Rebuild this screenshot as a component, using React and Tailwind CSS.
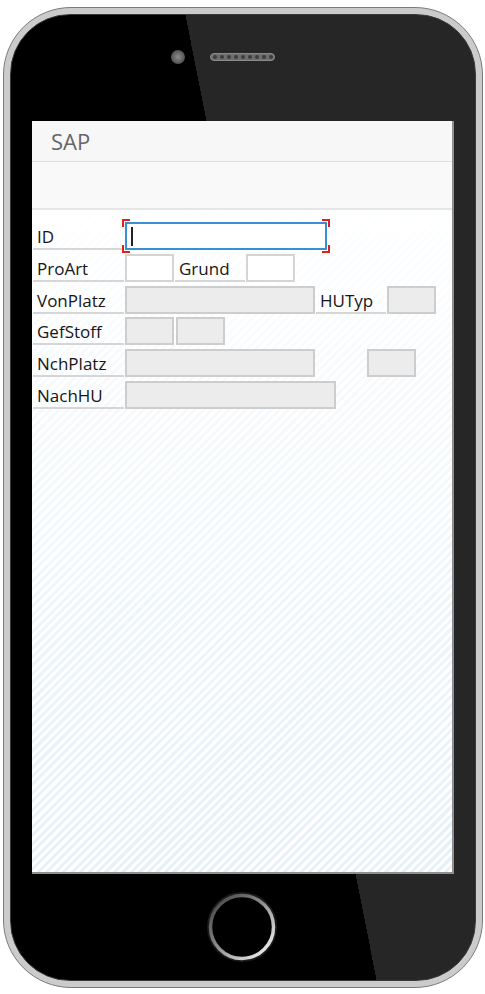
import React from 'react'

const font = { fontFamily: '"Open Sans", "Noto Sans", sans-serif' }

function Label({ children, className = '' }) {
    return (
        <div className={`flex items-end pl-[4px] border-b-2 border-[#d6d6d6] text-[17px] leading-[23px] text-[#161616] ${className}`}>
            {children}
        </div>
    )
}

function Field({ className = '', filled = true }) {
    return (
        <div
            className={`h-full border-2 ${filled ? 'bg-[#ececec] border-[#cdcdcd]' : 'bg-white border-[#d4d4d4]'} ${className}`}
        />
    )
}

function Corner({ className }) {
    return <span className={`absolute w-[8px] h-[8px] border-[#e0201c] ${className}`} />
}

function FocusField() {
    return (
        <div className="relative ml-[1px] w-[202px] h-full">
            <Corner className="-left-[3px] -top-[3px] border-l-2 border-t-2" />
            <Corner className="-right-[3px] -top-[3px] border-r-2 border-t-2" />
            <Corner className="-left-[3px] -bottom-[3px] border-l-2 border-b-2" />
            <Corner className="-right-[3px] -bottom-[3px] border-r-2 border-b-2" />
            <div className="h-full border-2 border-[#3a8fd3] bg-white flex items-center pl-[4px]">
                <span className="w-[2px] h-[19px] bg-[#222]" />
            </div>
        </div>
    )
}

function HomeButton() {
    return (
        <svg width="70" height="70" viewBox="0 0 70 70">
            <defs>
                <linearGradient id="ring" x1="0" y1="0" x2="1" y2="1">
                    <stop offset="0" stopColor="#3a3a3a" />
                    <stop offset="0.45" stopColor="#8a8a8a" />
                    <stop offset="1" stopColor="#ffffff" />
                </linearGradient>
            </defs>
            <circle cx="35" cy="35" r="34" fill="none" stroke="#1a1a1a" strokeWidth="2" />
            <circle cx="35" cy="35" r="31.5" fill="#000" stroke="url(#ring)" strokeWidth="3.5" />
        </svg>
    )
}

export default function App() {
    return (
        <div className="w-[485px] h-[994px] bg-white overflow-hidden pt-[7px]" style={font}>
            <div className="ml-[3px] w-[480px] h-[981px] rounded-[68px] border border-[#7a7a7a] bg-[#cbcbcb] p-[6px]">
                <div className="w-full h-full rounded-[60px] border border-[#3a3a3a] bg-[linear-gradient(78.8deg,#000_55.8%,#262626_55.8%)] flex flex-col">
                    {/* camera + speaker */}
                    <div className="mt-[35px] ml-[160px] h-[14px] flex items-center gap-[25px]">
                        <span className="w-[14px] h-[14px] rounded-full bg-[radial-gradient(circle,#8c8c8c_0%,#5e5e5e_55%,#3a3a3a_100%)]" />
                        <div className="w-[65px] h-[8px] rounded-full bg-[#6e6e6e] border border-[#8a8a8a] flex items-center justify-center gap-[3px]">
                            {Array.from({ length: 9 }).map((_, i) => (
                                <span key={i} className="w-[4px] h-[4px] rounded-full bg-[#3e3e3e]" />
                            ))}
                        </div>
                    </div>

                    {/* screen */}
                    <div className="mt-[57px] ml-[21px] w-[422px] h-[753px] flex flex-col bg-white border-r-2 border-b-2 border-[#8f8f8f]">
                        <div className="h-[41px] shrink-0 bg-[#f7f7f7] border-b border-[#dedede] flex items-center pl-[19px]">
                            <span className="text-[22px] text-[#666] leading-none">SAP</span>
                        </div>
                        <div className="h-[48px] shrink-0 bg-[#f9f9f9] border-b-2 border-[#e6e6e6]" />
                        <div className="flex-1 pt-[12px] pl-[1px] flex flex-col gap-[3.8px] bg-[linear-gradient(to_bottom,rgba(255,255,255,0.95),rgba(255,255,255,0.5)_45%,rgba(255,255,255,0)),repeating-linear-gradient(135deg,#ffffff_0_3px,#e6f1f8_3px_6px)]">
                            <div className="flex h-[28px]">
                                <Label className="w-[91px]">ID</Label>
                                <FocusField />
                            </div>
                            <div className="flex h-[28px]">
                                <Label className="w-[91px]">ProArt</Label>
                                <Field filled={false} className="ml-[1px] w-[49px]" />
                                <Label className="ml-[1px] w-[70px]">Grund</Label>
                                <Field filled={false} className="ml-[1px] w-[49px]" />
                            </div>
                            <div className="flex h-[28px]">
                                <Label className="w-[91px]">VonPlatz</Label>
                                <Field className="ml-[1px] w-[190px]" />
                                <Label className="ml-[1px] w-[70px]">HUTyp</Label>
                                <Field className="ml-[1px] w-[49px]" />
                            </div>
                            <div className="flex h-[28px]">
                                <Label className="w-[91px]">GefStoff</Label>
                                <Field className="ml-[1px] w-[49px]" />
                                <Field className="ml-[2px] w-[49px]" />
                            </div>
                            <div className="flex h-[28px]">
                                <Label className="w-[91px]">NchPlatz</Label>
                                <Field className="ml-[1px] w-[190px]" />
                                <Field className="ml-[52px] w-[49px]" />
                            </div>
                            <div className="flex h-[28px]">
                                <Label className="w-[91px]">NachHU</Label>
                                <Field className="ml-[1px] w-[211px]" />
                            </div>
                        </div>
                    </div>

                    {/* home button */}
                    <div className="mt-[18px] ml-[196px]">
                        <HomeButton />
                    </div>
                </div>
            </div>
        </div>
    )
}
